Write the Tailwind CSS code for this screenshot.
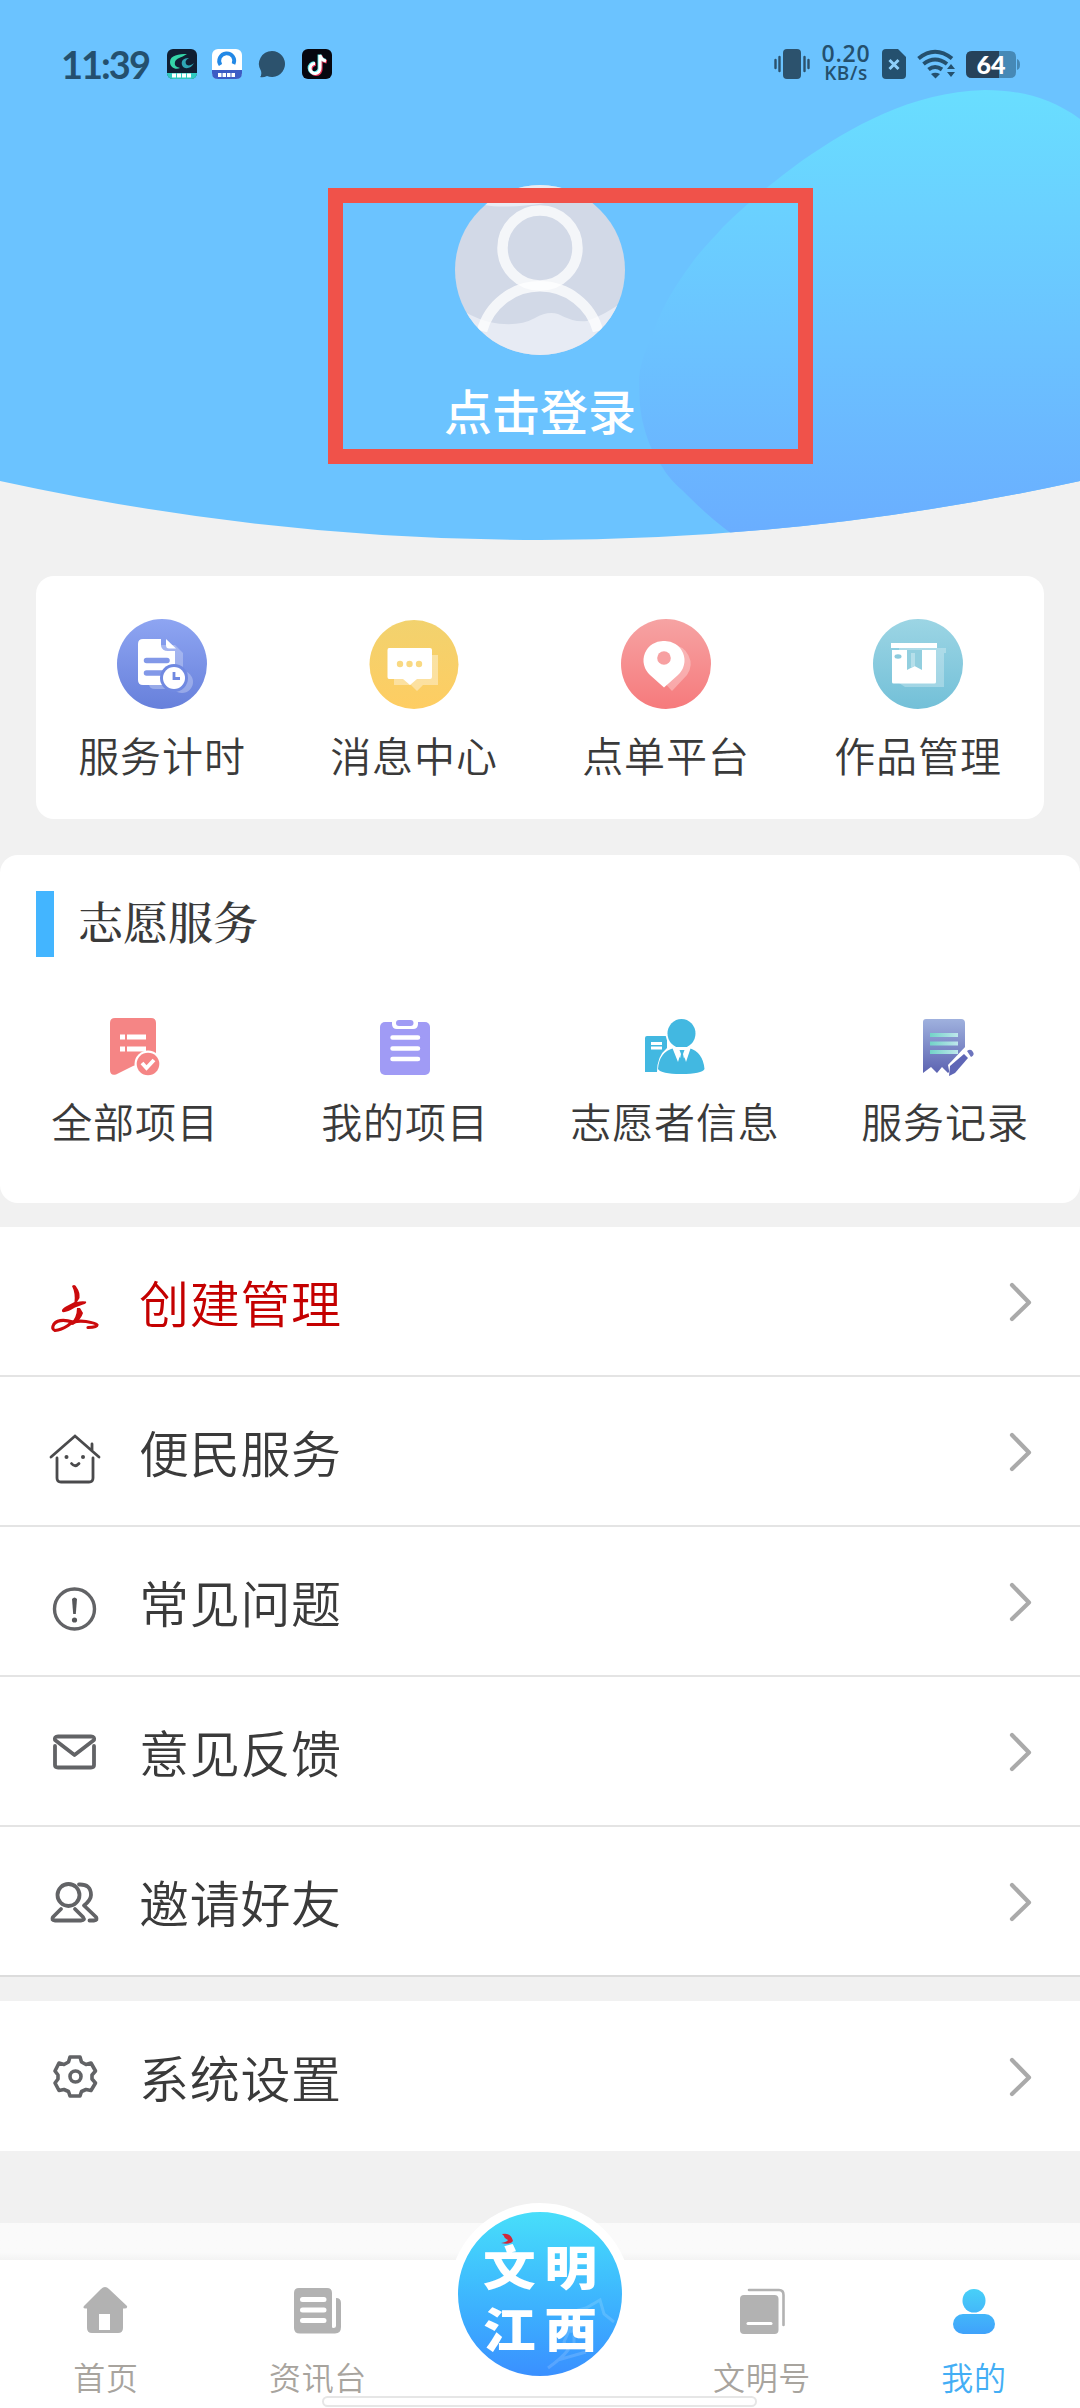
<!DOCTYPE html>
<html lang="zh-CN">
<head>
<meta charset="utf-8">
<title>我的</title>
<script src="https://cdn.jsdelivr.net/npm/@tailwindcss/browser@4"></script>
</head>
<body class="w-[1080px] h-[2408px] overflow-hidden bg-[#f1f1f1] text-[#3a3a3a] font-['Noto_Sans_CJK_SC',sans-serif] font-[350]">

<header class="relative h-[540px] flex flex-col items-center">
  <svg class="absolute inset-0" width="1080" height="540" viewBox="0 0 1080 540">
    <defs>
      <linearGradient id="blob" x1="0" y1="90" x2="0" y2="540" gradientUnits="userSpaceOnUse">
        <stop offset="0" stop-color="#69deff"/><stop offset=".55" stop-color="#6bc3ff"/><stop offset="1" stop-color="#6aadff"/>
      </linearGradient>
      <clipPath id="hd"><path d="M0 0H1080V481Q810 540 540 540Q270 540 0 481Z"/></clipPath>
    </defs>
    <g clip-path="url(#hd)">
      <rect width="1080" height="540" fill="#6bc3ff"/>
      <path d="M1080 119C1050 97 1018 90 985 90C910 92 850 128 803 160C768 186 745 205 723 227C706 246 697 255 689 267C674 288 665 303 658 320C648 343 641 360 639 377C639 398 640 412 644 427C649 446 655 456 661 465C668 477 675 484 682 490C700 508 715 522 740 540H1080Z" fill="url(#blob)"/>
    </g>
  </svg>

  <div class="relative w-full h-[128px] shrink-0 pl-[61px] pr-[60px] flex items-center text-[#24506e]">
    <span class="w-[106px] text-[38px] leading-none font-bold font-['Lato',sans-serif] tracking-[-2px]">11:39</span>
    <svg width="30" height="30" viewBox="0 0 30 30"><rect width="30" height="30" rx="6" fill="#101f33"/><path d="M0 24H30V25Q29 30 24 30H6Q1 30 0 25Z" fill="#2fc9c0"/><path d="M20 5C12 5 3 6 3 13C3 19 9 21 13 19C10 18 7 17 8 13C9 9 14 9 20 5Z" fill="#35d6a8"/><path d="M22 9C16 9 14 12 15 16C17 21 24 20 27 14C24 17 20 17 19 15C18 12 19 11 22 9Z" fill="#2fa6b4"/><path d="M5 26.500H25" stroke="#fff" stroke-width="4" stroke-dasharray="4 1"/></svg>
    <svg class="ml-[15px]" width="30" height="30" viewBox="0 0 30 30"><rect width="30" height="30" rx="6" fill="#fff"/><path d="M0 21H30V24Q30 30 24 30H6Q0 30 0 24Z" fill="#3c5cc4"/><path d="M8.500 16A7.500 7.500 0 1 1 21.500 15" fill="none" stroke="#2288e6" stroke-width="3.800"/><path d="M6 26H24" stroke="#fff" stroke-width="4" stroke-dasharray="3.500 1"/></svg>
    <svg class="ml-[16px]" width="28" height="28" viewBox="0 0 28 28"><path d="M14 1A13 13 0 1 1 9 26Q5 28 2 27Q4 25 3 21A13 13 0 0 1 14 1Z" fill="#2c526d"/></svg>
    <svg class="ml-[16px]" width="30" height="30" viewBox="0 0 30 30"><rect width="30" height="30" rx="6" fill="#06070f"/><g fill="none" stroke-width="3.600"><path d="M18 6V19A5 5 0 1 1 13 14.500M18 6Q19 11 24 12" stroke="#e8365a" transform="translate(.8 .8)"/><path d="M18 6V19A5 5 0 1 1 13 14.500M18 6Q19 11 24 12" stroke="#5fe8ea" transform="translate(-.6 -.5)"/><path d="M18 6V19A5 5 0 1 1 13 14.500M18 6Q19 11 24 12" stroke="#fff" stroke-width="3"/></g></svg>
    <div class="ml-auto flex items-center">
      <svg width="36" height="30" viewBox="0 0 36 30"><rect x="9" width="18" height="30" rx="4" fill="#2c526d"/><path d="M1.500 11V19M5.500 8V22M30.500 8V22M34.500 11V19" stroke="#2c526d" stroke-width="2.400" stroke-linecap="round"/></svg>
      <div class="ml-[11px] w-[50px] flex flex-col items-center whitespace-nowrap font-semibold font-['Open_Sans',sans-serif]">
        <span class="text-[23px] leading-[19px] tracking-[0.8px]">0.20</span>
        <span class="text-[19px] leading-[21px] tracking-[0.6px]">KB/s</span>
      </div>
      <svg class="ml-[11px]" width="24" height="30" viewBox="0 0 24 30"><path d="M4 0H16L24 8V26Q24 30 20 30H4Q0 30 0 26V4Q0 0 4 0Z" fill="#24506e"/><path d="M7.500 11L16.500 20M16.500 11L7.500 20" stroke="#8fd0fb" stroke-width="3"/></svg>
      <svg class="ml-[11px]" width="38" height="30" viewBox="0 0 38 30"><g fill="none" stroke="#24506e" stroke-width="4"><path d="M1.500 9.500Q18 -4 35 9.500"/><path d="M6.500 15Q18 6 30 15"/><path d="M11.500 20.500Q18 15.500 25 20.500"/></g><path d="M14 25Q18 22.500 23 25L18.500 29.500Z" fill="#24506e"/><path d="M30 20L34 15L38 20ZM30 23L34 28L38 23Z" fill="#24506e"/></svg>
      <div class="relative ml-[11px] w-[54px] h-[27px] flex items-center">
        <svg class="absolute inset-0" width="54" height="27" viewBox="0 0 54 27"><path d="M6 0H44Q50 0 50 6V21Q50 27 44 27H6Q0 27 0 21V6Q0 0 6 0ZM51 8Q54 9 54 13.500Q54 18 51 19Z" fill="#4689b6"/><path d="M6 0H33V27H6Q0 27 0 21V6Q0 0 6 0Z" fill="#26425a"/></svg>
        <span class="relative w-[50px] text-center text-white text-[25px] leading-none font-black font-['Lato',sans-serif]">64</span>
      </div>
    </div>
  </div>

  <svg class="relative mt-[57px]" width="170" height="170" viewBox="0 0 170 170">
    <defs><clipPath id="av"><circle cx="85" cy="85" r="85"/></clipPath></defs>
    <g clip-path="url(#av)">
      <rect width="170" height="170" fill="#d2d9e7"/>
      <path d="M0 0H170V18H90Q50 24 30 20L0 30Z" fill="#e7ecf5"/>
      <path d="M0 120Q15 132 34 137Q62 143 80 133Q92 126 103 129Q120 138 132 136Q150 130 170 115V170H0Z" fill="#e7ebf4"/>
      <circle cx="85" cy="63" r="37.500" fill="none" stroke="#fff" stroke-opacity=".75" stroke-width="10.500"/>
      <path d="M27 146A60 60 0 0 1 143 146" fill="none" stroke="#fff" stroke-opacity=".75" stroke-width="10.500"/>
    </g>
  </svg>
  <span class="relative mt-[19px] text-white text-[48px] leading-[70px] font-medium">点击登录</span>
  <div class="absolute left-[328px] top-[188px] w-[485px] h-[276px] border-[15px] border-[#f0524a]"></div>
</header>

<main>
  <section class="mt-[36px] mx-[36px] h-[243px] rounded-[18px] bg-white grid grid-cols-4 pt-[43px] text-[41px] tracking-[0.9px] leading-[60px]">
    <div class="flex flex-col items-center gap-[15px]">
      <svg width="90" height="90" viewBox="0 0 90 90">
        <defs><linearGradient id="g1" x2="0" y2="1"><stop stop-color="#8ea5f2"/><stop offset="1" stop-color="#6780db"/></linearGradient></defs>
        <circle cx="45" cy="45" r="45" fill="url(#g1)"/>
        <path d="M32 26H58L66 34V66L56 70H38Q32 70 32 65Z" fill="#fff" opacity=".28"/><circle cx="65" cy="63" r="11" fill="#fff" opacity=".28"/>
        <path d="M26 20H44V27Q45 32 51 32H58V66H26Q21 66 21 61V25Q21 20 26 20Z" fill="#fff"/><path d="M49 20L59 29.500H52Q49 29.500 49 26Z" fill="#fff"/>
        <path d="M29.500 41.500H50M29.500 54H46" stroke="#8298e8" stroke-width="5.500" stroke-linecap="round"/>
        <circle cx="57" cy="59" r="14" fill="#7089e1"/><circle cx="57" cy="59" r="11" fill="#fff"/><path d="M57 53V59.500H63" fill="none" stroke="#7089e1" stroke-width="2.800"/>
      </svg><span>服务计时</span>
    </div>
    <div class="flex flex-col items-center gap-[15px]">
      <svg width="90" height="90" viewBox="0 0 90 90">
        <defs><linearGradient id="g2" x2="0" y2="1"><stop stop-color="#f2d26e"/><stop offset="1" stop-color="#fecd62"/></linearGradient></defs>
        <circle cx="45" cy="45.500" r="44.500" fill="url(#g2)"/>
        <path d="M25 36H69V66H54L48 72L42 66H25Z" fill="#fff" opacity=".38"/>
        <path d="M20 29H61Q63 29 63 31V58Q63 60 61 60H48L41 66L34 60H20Q18.500 60 18.500 58V31Q18.500 29 20 29Z" fill="#fff"/>
        <g fill="#f9d982"><circle cx="31" cy="45" r="3.200"/><circle cx="40.500" cy="45" r="3.200"/><circle cx="50" cy="45" r="3.200"/></g>
      </svg><span>消息中心</span>
    </div>
    <div class="flex flex-col items-center gap-[15px]">
      <svg width="90" height="90" viewBox="0 0 90 90">
        <defs><linearGradient id="g3" x2="0" y2="1"><stop stop-color="#f6a3a3"/><stop offset="1" stop-color="#f67a7c"/></linearGradient></defs>
        <circle cx="45" cy="45" r="45" fill="url(#g3)"/>
        <path d="M51 26A19 19 0 0 1 66 56L51 72L40 60Z" fill="#fff" opacity=".3"/>
        <path d="M43 22A19.500 19.500 0 0 1 57 56L43 68.500L29 56A19.500 19.500 0 0 1 43 22Z" fill="#fff"/><circle cx="43" cy="39" r="6.800" fill="#f7a0a1"/>
      </svg><span>点单平台</span>
    </div>
    <div class="flex flex-col items-center gap-[15px]">
      <svg width="90" height="90" viewBox="0 0 90 90">
        <defs><linearGradient id="g4" x2="0" y2="1"><stop stop-color="#9cd5e4"/><stop offset="1" stop-color="#73c0d8"/></linearGradient></defs>
        <circle cx="45" cy="45" r="45" fill="url(#g4)"/>
        <path d="M26 29H73V34H71V68H32L26 64Z" fill="#fff" opacity=".28"/>
        <path d="M18 24H64V29H18ZM19 31H63V63Q63 64.500 61.500 64.500H20.500Q19 64.500 19 63Z" fill="#fff"/>
        <path d="M34 31H49V51L41.500 47L34 51Z" fill="#92cfdf"/><path d="M38 34H42V47L38 49Z" fill="#b5dfea"/><ellipse cx="25" cy="37.500" rx="3.500" ry="2.200" fill="#8ccbdd"/>
      </svg><span>作品管理</span>
    </div>
  </section>

  <section class="mt-[36px] h-[348px] rounded-[18px] bg-white pt-[36px]">
    <div class="flex items-center px-[36px] h-[66px]"><i class="w-[18px] h-[66px] bg-[#43b5ff] mr-[24px]"></i><h2 class="mb-[6px] text-[45px] leading-[60px] font-medium font-['Noto_Serif_CJK_SC','Noto_Sans_CJK_SC',serif]">志愿服务</h2></div>
    <div class="grid grid-cols-4 mt-[55px] text-[41px] tracking-[0.9px] leading-[60px]">
      <div class="flex flex-col items-center gap-[14px]">
        <svg width="66" height="64" viewBox="0 0 66 64"><path d="M13 6H49Q54 6 54 11V46L31 54L14 62.500Q8 64 8 58V11Q8 6 13 6Z" fill="#f58585"/><path d="M18 25H23M25 25H44M18 37H23M25 37H44" stroke="#fff" stroke-width="5"/><circle cx="46" cy="52" r="13.500" fill="#fff"/><circle cx="46" cy="52" r="11.300" fill="#f58585"/><path d="M40 51L44.500 56L52 48" fill="none" stroke="#fff" stroke-width="3.800"/></svg>
        <span>全部项目</span>
      </div>
      <div class="flex flex-col items-center gap-[14px]">
        <svg width="66" height="64" viewBox="0 0 66 64"><rect x="8" y="10" width="50" height="53" rx="5" fill="#a09bf5"/><path d="M20 8H46V12Q46 17 41 17H25Q20 17 20 12Z" fill="#fff"/><rect x="24" y="8" width="17.500" height="6" rx="3" fill="#a09bf5"/><path d="M20.500 25.500H46M20.500 36.500H46M20.500 47H46" stroke="#fff" stroke-width="4.500" stroke-linecap="round"/></svg>
        <span>我的项目</span>
      </div>
      <div class="flex flex-col items-center gap-[14px]">
        <svg width="66" height="64" viewBox="0 0 66 64"><path d="M5 24H25V36Q15 44 15 60H3V26Q3 24 5 24Z" fill="#42b8e1"/><path d="M9 31.500H20M9 36H20" stroke="#fff" stroke-width="2.800"/><ellipse cx="39.500" cy="21" rx="16" ry="17" fill="#fff"/><ellipse cx="39.500" cy="21.500" rx="14" ry="14.500" fill="#42b8e1"/><path d="M32 36Q17 40 16 57Q19 62 39 62Q60 62 62.500 57Q61 40 47 36L40.500 50Z" fill="#42b8e1"/><path d="M30 35L36 50L39 40H41L44 50L49 35Z" fill="#fff"/><path d="M37.500 38H42.500L41 42L42.500 49L40 51.500L37.500 49L39 42Z" fill="#42b8e1"/></svg>
        <span>志愿者信息</span>
      </div>
      <div class="flex flex-col items-center gap-[14px]">
        <svg width="66" height="64" viewBox="0 0 66 64"><defs><linearGradient id="g5" x2="0" y2="1"><stop stop-color="#9fb1de"/><stop offset="1" stop-color="#5d64b2"/></linearGradient><linearGradient id="g6"><stop stop-color="#72d3c8"/><stop offset="1" stop-color="#bfe7ec"/></linearGradient></defs><path d="M14 7H49Q53 7 53 11V44L36 61L30 55L25 61L19 55L11 61V10Q11 7 14 7Z" fill="url(#g5)"/><g fill="url(#g6)"><rect x="18" y="21" width="28" height="4"/><rect x="18" y="29.500" width="28" height="4"/><rect x="18" y="38" width="28" height="4"/></g><path d="M38 64L36 53L54 34L64 44L46 62Z" fill="#fff"/><path d="M38 54L52 42L56 46L43 61L37 64Z" fill="#5f66b6"/><path d="M55 39Q59 36 61 40Q63 43 59 45Z" fill="#6c74bd"/></svg>
        <span>服务记录</span>
      </div>
    </div>
  </section>

  <section class="mt-[24px] text-[50px] tracking-[0.7px] leading-[70px]">
    <div class="h-[150px] bg-white border-b-2 border-[#e4e4e4] pl-[46px] pr-[48px] flex items-center">
      <svg class="mt-[18px]" width="56" height="56" viewBox="0 0 56 56"><g fill="#cb0a0c"><path d="M26 4Q29 1 31 6Q34 10 33.500 16L31 20Q35 19 40 19.500Q41 21.500 37 22.500L29 25.500Q20 31 16.500 30Q14.500 28 19 25L28.500 20Q29.500 11 26 4Z"/><path d="M31 26H34L37 31Q35 38 27 43L24 42Q31 36 31 26Z"/></g><path d="M27 40Q13 36 8 42Q5 47 9 48.500Q15 48 22 43.500Q27 38 40 39.500Q50 41 51 43Q51 45.500 42 45.500" fill="none" stroke="#cb0a0c" stroke-width="3.200" stroke-linecap="round"/></svg>
      <span class="ml-[37px] grow text-[#c40000]">创建管理</span>
      <svg class="mt-[2px]" width="24" height="42" viewBox="0 0 24 42"><path d="M4 4L21 21.500L4 38" fill="none" stroke="#aaa" stroke-width="4.200" stroke-linecap="round" stroke-linejoin="round"/></svg>
    </div>
    <div class="h-[150px] bg-white border-b-2 border-[#e4e4e4] pl-[46px] pr-[48px] flex items-center">
      <svg class="mt-[14px]" width="56" height="56" viewBox="0 0 56 56"><g fill="none" stroke="#4a4a4c" stroke-width="2.800" stroke-linecap="round"><path d="M5 27L29 6L53 27M46 21V14M11 28V48Q11 52 15 52H43Q47 52 47 48V28" /><path d="M25.500 33.500Q29 38 33 33.500"/></g><circle cx="20.500" cy="27" r="2" fill="#4a4a4c"/><circle cx="37" cy="27" r="2" fill="#4a4a4c"/></svg>
      <span class="ml-[37px] grow">便民服务</span>
      <svg class="mt-[2px]" width="24" height="42" viewBox="0 0 24 42"><path d="M4 4L21 21.500L4 38" fill="none" stroke="#aaa" stroke-width="4.200" stroke-linecap="round" stroke-linejoin="round"/></svg>
    </div>
    <div class="h-[150px] bg-white border-b-2 border-[#e4e4e4] pl-[46px] pr-[48px] flex items-center">
      <svg class="mt-[16px]" width="56" height="56" viewBox="0 0 56 56"><circle cx="28.500" cy="28" r="20" fill="none" stroke="#626366" stroke-width="3.400"/><path d="M26 18Q28.500 15 31 18L29.800 33H27.200Z" fill="#56575a"/><circle cx="28.500" cy="39" r="2.600" fill="#56575a"/></svg>
      <span class="ml-[37px] grow">常见问题</span>
      <svg class="mt-[2px]" width="24" height="42" viewBox="0 0 24 42"><path d="M4 4L21 21.500L4 38" fill="none" stroke="#aaa" stroke-width="4.200" stroke-linecap="round" stroke-linejoin="round"/></svg>
    </div>
    <div class="h-[150px] bg-white border-b-2 border-[#e4e4e4] pl-[46px] pr-[48px] flex items-center">
      <svg class="mt-[2px]" width="56" height="56" viewBox="0 0 56 56"><g fill="none" stroke="#626366" stroke-width="3.800" stroke-linejoin="round" stroke-linecap="round"><path d="M9 16Q8 12.500 12 12.500H45Q49 12.500 48 16L28.500 31Z"/><path d="M9 22V41Q9 43.500 12 43.500H45Q48 43.500 48 41V22"/></g></svg>
      <span class="ml-[37px] grow">意见反馈</span>
      <svg class="mt-[2px]" width="24" height="42" viewBox="0 0 24 42"><path d="M4 4L21 21.500L4 38" fill="none" stroke="#aaa" stroke-width="4.200" stroke-linecap="round" stroke-linejoin="round"/></svg>
    </div>
    <div class="h-[150px] bg-white border-b-2 border-[#dcdcdc] pl-[46px] pr-[48px] flex items-center">
      <svg class="mt-[2px]" width="56" height="56" viewBox="0 0 56 56"><g fill="none" stroke="#626366" stroke-width="3.800" stroke-linejoin="round" stroke-linecap="round"><circle cx="22.500" cy="21" r="11"/><path d="M15 35L7 43Q5 46.500 9 46.500H35Q39.500 46.500 37 43L29 35"/><path d="M33 10.500Q45 10 45 21Q45 26 38 31.500L50 43Q52 46.500 48 46.500H43.500"/></g></svg>
      <span class="ml-[37px] grow">邀请好友</span>
      <svg class="mt-[2px]" width="24" height="42" viewBox="0 0 24 42"><path d="M4 4L21 21.500L4 38" fill="none" stroke="#aaa" stroke-width="4.200" stroke-linecap="round" stroke-linejoin="round"/></svg>
    </div>
    <div class="mt-[24px] h-[150px] bg-white pl-[46px] pr-[48px] flex items-center">
      <svg width="56" height="56" viewBox="0 0 56 56"><g fill="none" stroke="#626366" stroke-width="3.600" stroke-linejoin="round"><path d="M24 9H34L35.500 14L40 16.500L45 15L49.500 23L46 27V31L49.500 35L45 42.500L40 41.500L35.500 43.500L34 48H24L22.500 43.500L18 41.500L13 42.500L9 35L12 31V27L9 23L13 15L18 16.500L22.500 14Z"/><circle cx="29.500" cy="28.500" r="5.500"/></g></svg>
      <span class="ml-[37px] grow">系统设置</span>
      <svg class="mt-[2px]" width="24" height="42" viewBox="0 0 24 42"><path d="M4 4L21 21.500L4 38" fill="none" stroke="#aaa" stroke-width="4.200" stroke-linecap="round" stroke-linejoin="round"/></svg>
    </div>
  </section>
</main>

<footer class="relative mt-[72px]">
  <div class="h-[37px] bg-linear-to-b from-[#fafafa] from-80% to-[#f3f3f3]"></div>
  <nav class="h-[148px] bg-white grid grid-cols-[212px_212px_232px_212px_212px] pt-[24px] text-[32px] tracking-[0.7px] leading-[48px] text-[#a8a49e]">
    <div class="flex flex-col items-center gap-[16px]">
      <svg width="50" height="52" viewBox="0 0 50 52"><path d="M20 5Q24 1 28 5L46 22Q47 25 42 24.500V44Q42 49 37 49H11Q6 49 6 44V24.500Q1 25 3 22ZM18 30V46H29V30Z" fill="#b2b2b2" fill-rule="evenodd"/></svg>
      <span>首页</span>
    </div>
    <div class="flex flex-col items-center gap-[16px]">
      <svg width="50" height="52" viewBox="0 0 50 52"><path d="M6 4H34Q39 4 39 9V43Q39 44 40.500 44Q43 44 43 42V14Q48 14 48 19V43Q48 49.500 42 49.500H7Q1 49.500 1 44V9Q1 4 6 4Z" fill="#b2b2b2"/><path d="M9.500 15.500H31M9.500 26H31M9.500 36.500H31" stroke="#fff" stroke-width="5" stroke-linecap="round"/></svg>
      <span>资讯台</span>
    </div>
    <div></div>
    <div class="flex flex-col items-center gap-[16px]">
      <svg width="50" height="52" viewBox="0 0 50 52"><rect x="3" y="11" width="38.500" height="39" rx="4" fill="#b2b2b2"/><path d="M12 6H42Q46.500 6 46.500 11V41" fill="none" stroke="#b2b2b2" stroke-width="2.600" stroke-linecap="round"/><path d="M11 39.500H34" stroke="#fff" stroke-width="3" stroke-linecap="round"/></svg>
      <span>文明号</span>
    </div>
    <div class="flex flex-col items-center gap-[16px] text-[#43aef5]">
      <svg width="50" height="52" viewBox="0 0 50 52"><defs><linearGradient id="g7" x1="0" y1="5" x2="0" y2="50" gradientUnits="userSpaceOnUse"><stop stop-color="#48d0f8"/><stop offset="1" stop-color="#3fa2fb"/></linearGradient></defs><g fill="url(#g7)"><rect x="13.500" y="5" width="23" height="23.500" rx="11.500"/><rect x="4" y="30" width="42" height="20" rx="10"/></g></svg>
      <span>我的</span>
    </div>
  </nav>
  <div class="absolute left-[449px] top-[-20px] size-[182px] rounded-full border-[9px] border-white bg-linear-to-b from-[#48defa] to-[#3a90ff] flex justify-center items-center">
    <svg class="absolute inset-0" width="164" height="164" viewBox="0 0 164 164"><path d="M90 156Q104 146 110 138L106 130L114 112L120 98L128 96L142 88L146 102L156 110M112 120L124 114M100 148L128 140M116 106V136" fill="none" stroke="#fff" stroke-opacity=".15" stroke-width="3"/></svg>
    <div class="relative mt-[3px] text-white font-black text-[47px] leading-[62px] whitespace-nowrap scale-x-112">
      <div class="flex gap-[8px]"><span>文</span><span>明</span></div>
      <div class="flex gap-[8px]"><span>江</span><span>西</span></div>
    </div>
    <svg class="absolute left-[41px] top-[20px]" width="18" height="14" viewBox="0 0 18 14"><path d="M3 2Q12 0 14 9Q12 13 2 11Q8 10 9 8Q5 6 5 4Z" fill="#d0283a"/></svg>
  </div>
  <div class="absolute left-[322px] bottom-[1px] w-[435px] h-[11px] rounded-full border-2 border-[#e6e6e6] bg-white"></div>
</footer>
</body>
</html>
